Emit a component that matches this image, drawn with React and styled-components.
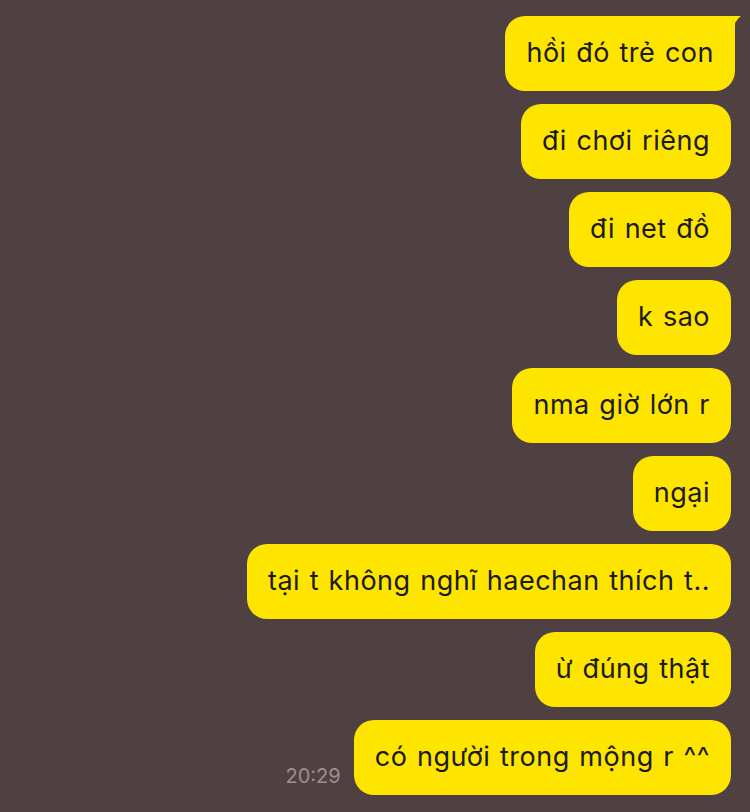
import React from 'react'
import styled, {createGlobalStyle} from 'styled-components'

const Global = createGlobalStyle`
  html, body {
    margin: 0;
    padding: 0;
    background: #4f4042;
  }
  body {
    font-family: Inter, "Liberation Sans", Arial, sans-serif;
  }
`

const Chat = styled.div`
  width: 750px;
  height: 812px;
  box-sizing: border-box;
  padding: 16px 19px 0 0;
  display: flex;
  flex-direction: column;
  align-items: flex-end;
  gap: 13px;
  overflow: hidden;
`

const Row = styled.div`
  display: flex;
  align-items: flex-end;
  gap: 13px;
`

const Bubble = styled.div`
  position: relative;
  background: #fee500;
  color: #1b1a17;
  font-size: 27px;
  line-height: 38px;
  letter-spacing: 0.5px;
  word-spacing: 1.5px;
  padding: 18px 21px 19px 21px;
  border-radius: 20px;
  border-top-right-radius: ${p => (p.$tail ? '6px' : '20px')};
  margin-right: ${p => (p.$tail ? '-4px' : '0')};
  white-space: nowrap;
`

const Tail = styled.svg`
  position: absolute;
  top: 0;
  right: -6px;
  width: 16px;
  height: 14px;
`

const Time = styled.span`
  font-size: 20px;
  color: #9c8f90;
  margin-bottom: 7px;
`

const msgs = [
  'hồi đó trẻ con',
  'đi chơi riêng',
  'đi net đồ',
  'k sao',
  'nma giờ lớn r',
  'ngại',
  'tại t không nghĩ haechan thích t..',
  'ừ đúng thật',
]

export default function App() {
  return (
    <>
      <Global />
      <Chat>
        {msgs.map((m, i) => (
          <Bubble key={i} $tail={i === 0}>
            {i === 0 && (
              <Tail viewBox="0 0 16 14">
                <path d="M0 0 L16 0 Q10 4 8 14 L0 14 Z" fill="#fee500" />
              </Tail>
            )}
            {m}
          </Bubble>
        ))}
        <Row>
          <Time>20:29</Time>
          <Bubble>có người trong mộng r ^^</Bubble>
        </Row>
      </Chat>
    </>
  )
}
